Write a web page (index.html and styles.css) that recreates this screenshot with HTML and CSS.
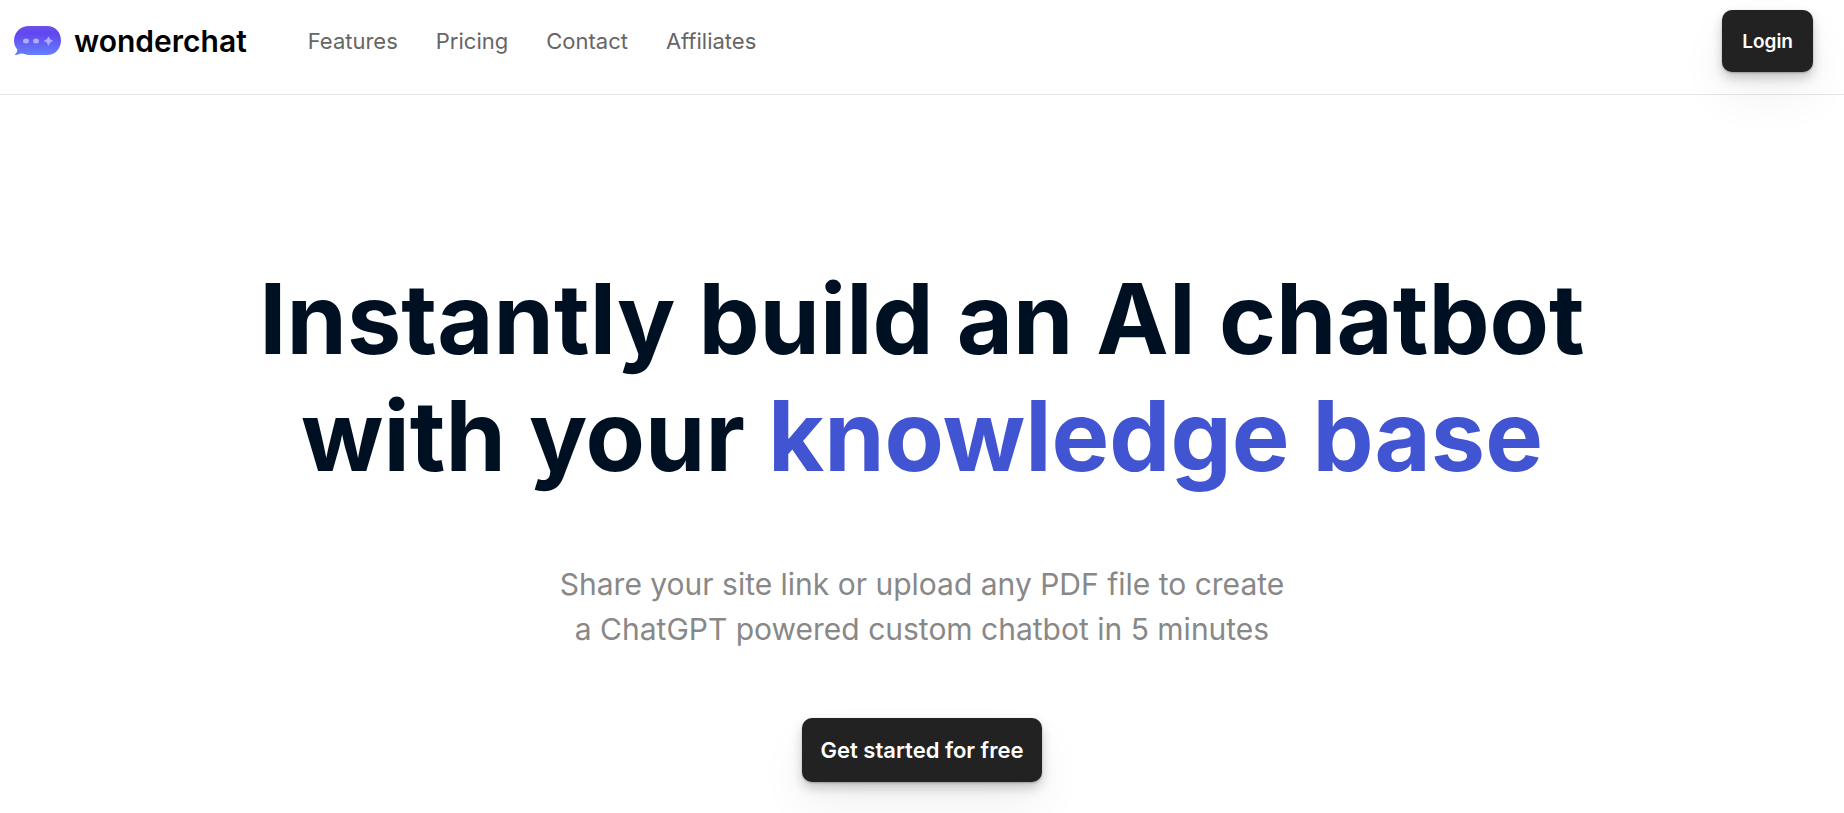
FILE: index.html
```
<!DOCTYPE html>
<html lang="en">
<head>
  <meta charset="UTF-8" />
  <meta name="viewport" content="width=device-width, initial-scale=1" />
  <title>Wonderchat</title>
  <link rel="stylesheet" href="styles.css">
</head>
<body>

  <header class="header">
    <a class="logo" href="#">
      <svg class="logo-icon" viewBox="0 0 48 30" aria-hidden="true">
        <defs>
          <linearGradient id="bubble" x1="0" y1="0" x2="0" y2="1">
            <stop offset="0" stop-color="#6a52ea" />
            <stop offset="0.25" stop-color="#6046ee" />
            <stop offset="1" stop-color="#6580ff" />
          </linearGradient>
        </defs>
        <path fill="url(#bubble)" d="M15 0H33C41 0 47 6 47 14.500C47 23 41 29 33 29H15C12 29 10 27.500 7.500 27.500C5.500 27.500 4 29 1.500 29C1 29 .8 28.400 1.300 28C2.800 26.800 3.300 25.500 3.300 23.500C1.200 21 0 18 0 14.500C0 6 7 0 15 0Z" />
        <ellipse cx="12" cy="15" rx="3" ry="2.500" fill="#b3a9fb" />
        <ellipse cx="22" cy="15" rx="3" ry="2.500" fill="#b3a9fb" />
        <path fill="#b3a9fb" d="M34.500 10.500C35.300 10.500 35.500 13 36.300 13.600C37.100 14.200 39 14.200 39 15C39 15.800 37.100 15.800 36.300 16.400C35.500 17 35.300 19.500 34.500 19.500C33.700 19.500 33.500 17 32.700 16.400C31.900 15.800 30 15.800 30 15C30 14.200 31.900 14.200 32.700 13.600C33.500 13 33.700 10.500 34.500 10.500Z" />
      </svg>
      <span class="logo-text">wonderchat</span>
    </a>
    <nav class="nav">
      <a href="#features">Features</a>
      <a href="#pricing">Pricing</a>
      <a href="#contact">Contact</a>
      <a href="#affiliates">Affiliates</a>
    </nav>
    <button class="btn btn-login" type="button">Login</button>
  </header>

  <main class="hero">
    <h1>Instantly build an AI chatbot<br>with your <span class="accent">knowledge base</span></h1>
    <p class="subtitle">Share your site link or upload any PDF file to create<br>a ChatGPT powered custom chatbot in 5 minutes</p>
    <button class="btn btn-start" type="button">Get started for free</button>
  </main>

</body>
</html>
```
FILE: styles.css
```
* {
  box-sizing: border-box;
}
body {
  margin: 0;
  font-family: Inter, sans-serif;
  background: #fff;
  color: #001023;
  overflow-x: hidden;
}
a {
  color: inherit;
  text-decoration: none;
}
.header {
  display: flex;
  align-items: flex-start;
  padding: 10px 31px 22px 14px;
  border-bottom: 1px solid #e6e6e6;
}
.logo {
  display: flex;
  align-items: center;
  height: 62px;
}
.logo-icon {
  width: 48px;
  height: 30px;
}
.logo-text {
  margin-left: 12px;
  font-size: 30px;
  font-weight: 600;
  color: #000;
}
.nav {
  display: flex;
  align-items: center;
  gap: 38px;
  height: 62px;
  margin-left: 61px;
  font-size: 22px;
  color: #666;
}
.btn {
  border: none;
  border-radius: 10px;
  background: #222;
  color: #fff;
  font-family: inherit;
  font-weight: 600;
  cursor: pointer;
  box-shadow: 0 1px 2px rgba(0,0,0,0.25), 0 6px 12px rgba(0,0,0,0.2), 0 24px 48px rgba(0,0,0,0.06);
}
.btn-login {
  height: 62px;
  margin-left: auto;
  padding: 0 20px;
  font-size: 19px;
}
.hero {
  display: flex;
  flex-direction: column;
  align-items: center;
  padding: 165px 20px 31px;
  text-align: center;
}
h1 {
  margin: 0;
  font-size: 97px;
  font-weight: 700;
  line-height: 117px;
}
.accent {
  color: #4154d1;
}
.subtitle {
  margin: 68px 0 66px;
  font-size: 30px;
  line-height: 45px;
  color: #888;
}
.btn-start {
  height: 64px;
  padding: 0 19px;
  font-size: 22px;
}
```
